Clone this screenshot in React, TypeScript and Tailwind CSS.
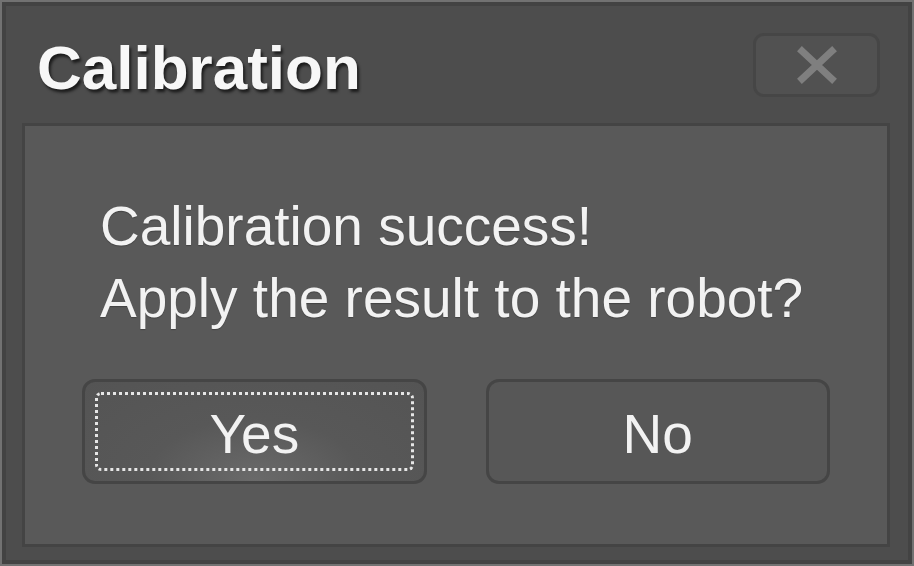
export default function App() {
  return (
    <div className="w-[914px] h-[566px] bg-[#727272] p-[2px] font-['Liberation_Sans',Arial,sans-serif]">
      <div className="flex h-full w-full flex-col border-[4px] border-[#434343] bg-[#4d4d4d]">
        {/* title bar */}
        <div className="flex h-[117px] shrink-0 items-start justify-between pl-[31px] pr-[28px]">
          <h1 className="mt-[26px] text-[62px] font-bold leading-[72px] text-[#f7f7f7] [text-shadow:2px_3px_3px_rgba(0,0,0,0.65)]">
            Calibration
          </h1>
          <button className="mt-[27px] flex h-[64px] w-[127px] items-center justify-center rounded-[11px] border-[3px] border-[#464646] bg-[#515151]">
            <svg width="42" height="38" viewBox="0 0 42 38">
              <path d="M6 5 L36 33 M36 5 L6 33" stroke="#7f7f7f" strokeWidth="7" strokeLinecap="square" />
            </svg>
          </button>
        </div>

        {/* panel */}
        <div className="mb-[13px] ml-[16px] mr-[18px] flex flex-1 flex-col border-[3px] border-[#444444] bg-[#595959] px-[57px] pt-[64px]">
          <p className="pl-[18px] text-[55px] leading-[72px] text-[#f2f2f2] [text-shadow:0_1px_1px_rgba(0,0,0,0.25)]">
            Calibration success!
            <br />
            Apply the result to the robot?
          </p>
          <div className="mt-[45px] flex gap-[59px]">
            <button className="flex h-[105px] w-[346px] items-center justify-center rounded-[13px] border-[3px] border-[#454545] bg-[radial-gradient(ellipse_at_50%_100%,#6a6a6a_0%,#585858_45%,#545454_100%)] p-[10px]">
              <span className="flex h-full w-full items-center justify-center rounded-[6px] border-[3px] border-dotted border-[#e6e6e6] pt-[6px] text-[55px] leading-none text-[#f2f2f2]">
                Yes
              </span>
            </button>
            <button className="flex h-[105px] w-[346px] items-center justify-center rounded-[13px] border-[3px] border-[#454545] bg-[#575757] pt-[6px] text-[55px] leading-none text-[#f2f2f2]">
              No
            </button>
          </div>
        </div>
      </div>
    </div>
  )
}
